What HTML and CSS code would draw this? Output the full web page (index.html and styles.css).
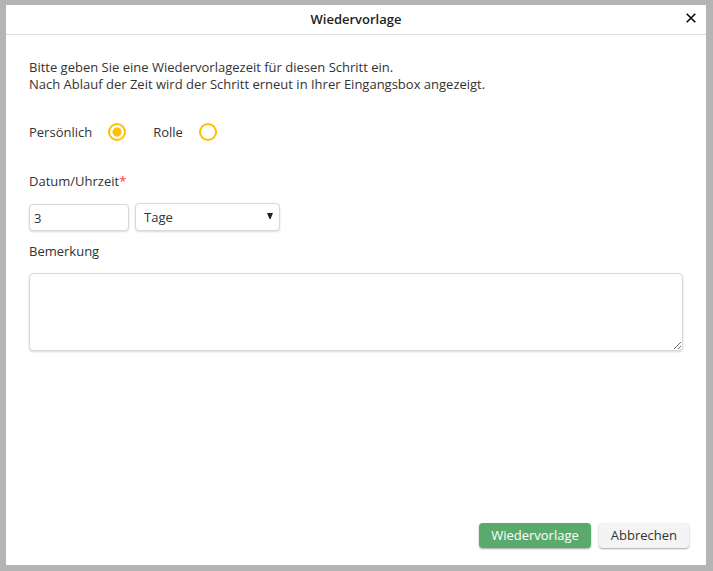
FILE: index.html
```html
<!DOCTYPE html>
<html lang="de">
<head>
  <meta charset="UTF-8" />
  <meta name="viewport" content="width=device-width, initial-scale=1.0"/>
  <title>Wiedervorlage</title>
  <link rel="stylesheet" href="styles.css">
</head>
<body>
  <form class="dialog">
    <div class="dialog-header">
      <h1 class="dialog-title">Wiedervorlage</h1>
      <button type="button" class="close-btn" aria-label="Schließen">
        <svg width="10" height="10" viewBox="0 0 10 10"><path d="M0.700 0.700l8.600 8.600M9.300 0.700L0.700 9.300" fill="none" stroke="#000" stroke-width="1.500"/></svg>
      </button>
    </div>

    <div class="dialog-body">
      <p class="intro">Bitte geben Sie eine Wiedervorlagezeit für diesen Schritt ein.<br>Nach Ablauf der Zeit wird der Schritt erneut in Ihrer Eingangsbox angezeigt.</p>

      <div class="radio-group">
        <label class="radio">Persönlich <input type="radio" name="target" checked></label>
        <label class="radio">Rolle <input type="radio" name="target"></label>
      </div>

      <label class="field-label" for="amount">Datum/Uhrzeit<span class="required">*</span></label>
      <div class="time-row">
        <input type="text" id="amount" class="control amount" value="3">
        <div class="select-wrap">
          <select class="control unit" aria-label="Einheit">
            <option>Tage</option>
          </select>
          <svg class="arrow" width="6" height="6" viewBox="0 0 6 6"><path d="M0 0h6L3.500 6h-1z" fill="#222"/></svg>
        </div>
      </div>

      <label class="field-label" for="remark">Bemerkung</label>
      <textarea id="remark" class="control remark"></textarea>
    </div>

    <div class="dialog-footer">
      <button type="submit" class="btn btn-primary">Wiedervorlage</button>
      <button type="button" class="btn">Abbrechen</button>
    </div>
  </form>
</body>
</html>
```

FILE: styles.css
```css
* {
  margin: 0;
  padding: 0;
  box-sizing: border-box;
}

body {
  min-height: 100vh;
  display: flex;
  padding: 5px 7px 6px 6px;
  background-color: #b4b4b4;
  color: #333;
  font-family: 'Open Sans', sans-serif;
  font-size: 13px;
  line-height: 17px;
}

input, select, textarea, button {
  font: inherit;
  color: inherit;
}

.dialog {
  flex: 1;
  display: flex;
  flex-direction: column;
  background-color: #fff;
}

.dialog-header {
  position: relative;
  height: 30px;
  display: flex;
  align-items: center;
  justify-content: center;
  border-bottom: 1px solid #ddd;
}

.dialog-title {
  font-size: 13px;
  font-weight: 600;
  color: #222;
}

.close-btn {
  position: absolute;
  top: 4px;
  right: 6px;
  width: 18px;
  height: 18px;
  display: flex;
  align-items: center;
  justify-content: center;
  border: none;
  background: none;
  cursor: pointer;
}

.dialog-body {
  flex: 1;
  padding: 24px 23px;
}

.intro {
  margin-bottom: 30px;
}

.radio-group {
  display: flex;
  gap: 27px;
  margin-bottom: 32px;
}

.radio {
  display: flex;
  align-items: center;
  gap: 16px;
}

.radio input {
  appearance: none;
  width: 18px;
  height: 18px;
  border: 2px solid #ffbf00;
  border-radius: 50%;
}

.radio input:checked {
  background: radial-gradient(circle, #ffbf00 4px, transparent 5px);
}

.field-label {
  display: block;
}

.required {
  color: #ff3347;
}

.control {
  border: 1px solid #d9d9d9;
  border-radius: 4px;
  background-color: #fff;
  box-shadow: 0 1px 2px rgba(0, 0, 0, 0.15);
}

.time-row {
  display: flex;
  align-items: flex-end;
  gap: 6px;
  margin: 13px 0 12px;
}

.amount {
  width: 100px;
  height: 27px;
  padding: 0 4px;
}

.select-wrap {
  position: relative;
}

.unit {
  display: block;
  appearance: none;
  width: 145px;
  height: 28px;
  padding: 0 8px;
}

.arrow {
  position: absolute;
  top: 10px;
  right: 7px;
  pointer-events: none;
}

.remark {
  display: block;
  width: 100%;
  height: 78px;
  margin-top: 13px;
  padding: 4px;
  resize: both;
}

.dialog-footer {
  display: flex;
  justify-content: flex-end;
  gap: 8px;
  padding: 0 17px 17px;
}

.btn {
  height: 25px;
  padding: 0 12px;
  border: none;
  border-radius: 4px;
  background-color: #f4f4f4;
  box-shadow: 0 1px 2px rgba(0, 0, 0, 0.35);
  cursor: pointer;
}

.btn-primary {
  background-color: #5aaa6e;
  color: #fff;
  font-weight: 500;
}
```
